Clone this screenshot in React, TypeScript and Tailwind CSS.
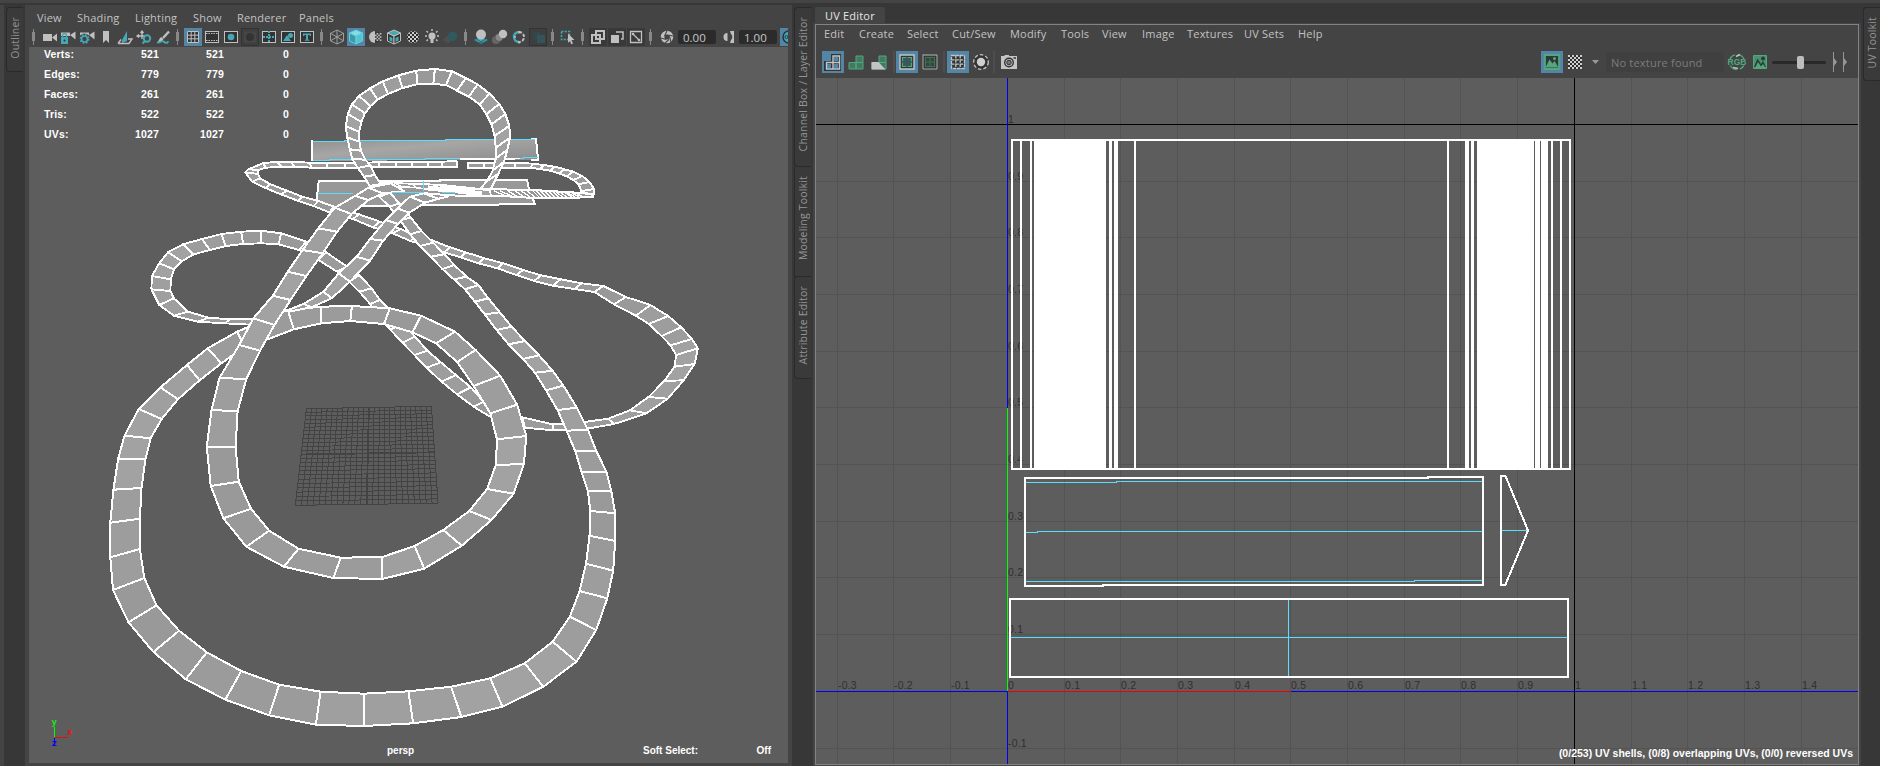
import React from "react";

type Pair = [number, number, number, number];

const px = (x: number) => Math.round((100 + x / 2.529) * 10) / 10;
const py = (y: number) => Math.round((50 + y / 3) * 10) / 10;

/* ---------- track geometry: [edge A x, y, edge B x, y] per cross-section ---------- */

const outerLoop: Pair[] = [
  [475, 780, 490, 838], [412, 812, 424, 868], [347, 845, 365, 890], [272, 895, 307, 940], [220, 945, 252, 991],
  [153, 1012, 197, 1048], [98, 1077, 156, 1107], [62, 1157, 128, 1165], [46, 1226, 115, 1227], [34, 1319, 105, 1314],
  [26, 1418, 101, 1406], [26, 1522, 101, 1497], [33, 1620, 112, 1584], [72, 1717, 143, 1666], [135, 1806, 200, 1742],
  [217, 1888, 270, 1807], [317, 1949, 357, 1863], [428, 1996, 453, 1904], [546, 2024, 558, 1925], [667, 2028, 667, 1931],
  [792, 2020, 780, 1924], [914, 2001, 888, 1910], [1018, 1970, 987, 1885], [1121, 1910, 1074, 1840], [1205, 1835, 1145, 1775],
  [1255, 1740, 1188, 1700], [1283, 1645, 1213, 1623], [1298, 1562, 1229, 1541], [1303, 1473, 1238, 1457], [1303, 1390, 1240, 1383],
  [1293, 1324, 1234, 1323], [1281, 1266, 1218, 1266], [1255, 1202, 1202, 1204], [1234, 1139, 1180, 1142], [1206, 1073, 1157, 1080],
  [1172, 1007, 1128, 1021], [1145, 962, 1100, 968], [1110, 916, 1070, 927], [1075, 873, 1033, 883], [1041, 830, 1003, 840],
  [1011, 787, 973, 793], [982, 745, 948, 755], [957, 705, 923, 718], [927, 680, 895, 688], [896, 645, 866, 657],
  [871, 613, 836, 620], [843, 578, 809, 588], [813, 543, 784, 553], [786, 503, 759, 510], [757, 460, 732, 470], [733, 428, 706, 440],
];

const innerRing: Pair[] = [
  [735, 400, 770, 424], [679, 413, 715, 430], [645, 438, 679, 450], [594, 473, 636, 492], [552, 535, 600, 545], [512, 600, 563, 610],
  [475, 665, 522, 678], [437, 737, 482, 750], [388, 805, 441, 825], [352, 885, 405, 902], [302, 984, 370, 987],
  [282, 1080, 348, 1084], [270, 1191, 343, 1191], [280, 1308, 351, 1295], [312, 1405, 382, 1376], [370, 1490, 428, 1442],
  [465, 1550, 502, 1496], [590, 1584, 609, 1523], [714, 1587, 714, 1521], [820, 1556, 796, 1488], [915, 1487, 868, 1440],
  [990, 1410, 934, 1383], [1046, 1331, 979, 1317], [1072, 1242, 1001, 1245], [1078, 1158, 1004, 1168], [1055, 1064, 987, 1090],
  [1012, 977, 945, 1008], [950, 900, 903, 936], [898, 845, 850, 880], [812, 797, 790, 847], [733, 775, 718, 822],
  [637, 768, 633, 813], [558, 770, 560, 820], [475, 780, 490, 838],
];

const middleTrack: Pair[] = [
  [856, 432, 880, 440], [818, 430, 856, 446], [784, 440, 822, 458], [752, 475, 782, 488], [723, 510, 754, 522], [683, 567, 716, 572],
  [649, 620, 683, 632], [604, 670, 632, 695], [565, 725, 586, 745], [515, 762, 535, 772], [475, 780, 482, 784],
];

const leftLoop: Pair[] = [
  [380, 824, 392, 808], [315, 820, 330, 808], [247, 815, 275, 803], [187, 797, 222, 785], [150, 765, 187, 745], [130, 718, 178, 723],
  [131, 678, 179, 688], [150, 640, 187, 658], [172, 607, 207, 634], [210, 583, 237, 613], [258, 567, 278, 600],
  [307, 552, 318, 588], [357, 545, 362, 582], [407, 542, 407, 580], [458, 550, 452, 583], [522, 575, 503, 600],
  [572, 607, 552, 630], [625, 650, 600, 665], [656, 675, 630, 695], [687, 715, 656, 725], [708, 750, 683, 762],
  [735, 780, 705, 800], [765, 820, 735, 840], [797, 860, 765, 878], [828, 902, 795, 915], [862, 937, 826, 953],
  [900, 975, 864, 995], [938, 1012, 903, 1033], [970, 1055, 945, 1070], [1020, 1090, 1000, 1110], [1068, 1102, 1075, 1133],
  [1145, 1123, 1145, 1141], [1220, 1117, 1232, 1136], [1285, 1106, 1300, 1122], [1340, 1081, 1382, 1090], [1387, 1041, 1436, 1046],
  [1427, 993, 1476, 991], [1453, 950, 1504, 942], [1457, 915, 1512, 895], [1443, 886, 1497, 867], [1420, 858, 1470, 832],
  [1388, 822, 1437, 798], [1355, 797, 1392, 765], [1300, 763, 1330, 741], [1250, 726, 1273, 708], [1200, 717, 1218, 700],
  [1145, 707, 1165, 688], [1098, 693, 1115, 676], [1053, 675, 1070, 660], [1005, 655, 1020, 640], [957, 640, 972, 625],
  [912, 622, 925, 607], [870, 607, 885, 592], [830, 588, 843, 572], [785, 573, 800, 558], [740, 550, 760, 537],
  [690, 532, 708, 515], [640, 507, 655, 493], [580, 487, 592, 470], [540, 468, 552, 453], [500, 452, 512, 440],
  [457, 433, 473, 422], [420, 415, 430, 402], [385, 395, 405, 385], [367, 367, 400, 372], [375, 358, 400, 360],
  [412, 340, 420, 353], [445, 335, 460, 350], [483, 335, 492, 350], [530, 338, 536, 353], [575, 338, 575, 353],
  [620, 338, 620, 353], [662, 338, 662, 353], [705, 337, 705, 352], [748, 336, 748, 351], [788, 335, 788, 350],
  [830, 335, 830, 350], [866, 335, 866, 350], [902, 333, 902, 352],
];

const rightStrip: Pair[] = [
  [930, 338, 930, 355], [970, 338, 970, 355], [1012, 338, 1012, 353], [1052, 338, 1048, 353], [1095, 341, 1088, 353], [1122, 345, 1112, 357],
  [1150, 350, 1138, 362], [1175, 358, 1160, 370], [1197, 365, 1180, 379], [1220, 378, 1197, 390], [1238, 396, 1210, 403],
  [1250, 417, 1218, 423], [1249, 432, 1214, 428], [1215, 438, 1190, 427],
];

const topLoop: Pair[] = [
  [682, 408, 710, 402], [668, 380, 695, 375], [652, 354, 684, 346], [638, 327, 671, 329], [632, 298, 660, 302],
  [625, 262, 656, 275], [622, 228, 655, 246], [627, 192, 661, 216], [637, 163, 670, 190], [655, 138, 684, 168],
  [683, 115, 702, 149], [715, 94, 728, 132], [755, 76, 765, 114], [800, 62, 802, 103], [847, 57, 843, 102],
  [890, 64, 875, 105], [925, 84, 903, 122], [955, 103, 933, 140], [985, 131, 960, 163], [1010, 162, 977, 192],
  [1025, 192, 990, 223], [1035, 227, 998, 258], [1037, 263, 1001, 293], [1030, 300, 1001, 325], [1022, 335, 993, 362],
  [1007, 372, 980, 392], [988, 418, 960, 418],
];

const upperThread: Pair[] = [
  [712, 397, 725, 412], [745, 398, 762, 410], [790, 402, 800, 413], [830, 402, 832, 418], [870, 409, 880, 424],
  [910, 415, 920, 430], [945, 418, 952, 436], [985, 420, 990, 438],
];

const quad = ([a, b, c, d]: Pair, [e, f, g, h]: Pair) =>
  `${px(a)},${py(b)} ${px(e)},${py(f)} ${px(g)},${py(h)} ${px(c)},${py(d)}`;

const shades = ["#9b9b9b", "#9f9f9f", "#a2a2a2", "#9d9d9d", "#999999"];

const Strip = ({ data, w = 2 }: { data: Pair[]; w?: number }) => (
  <g stroke="#fff" strokeWidth={w} strokeLinejoin="round">
    {data.slice(1).map((p, i) => (
      <polygon key={i} points={quad(data[i], p)} fill={shades[Math.floor(i / 3) % 5]} />
    ))}
  </g>
);

const FloorGrid = () => {
  const tl = [522, 1076], tr = [838, 1069], br = [855, 1360], bl = [494, 1366];
  const mix = (a: number[], b: number[], t: number) => [a[0] + (b[0] - a[0]) * t, a[1] + (b[1] - a[1]) * t];
  const lines = [];
  for (let i = 0; i <= 24; i++) {
    const t = i / 24;
    const v = t / (t + 1.11 * (1 - t));
    const a = mix(tl, tr, t), b = mix(bl, br, t), c = mix(tl, bl, v), d = mix(tr, br, v);
    const w = i === 12 ? 1.8 : 1;
    lines.push(
      <line key={`v${i}`} x1={px(a[0])} y1={py(a[1])} x2={px(b[0])} y2={py(b[1])} strokeWidth={w} />,
      <line key={`h${i}`} x1={px(c[0])} y1={py(c[1])} x2={px(d[0])} y2={py(d[1])} strokeWidth={w} />
    );
  }
  return <g stroke="#434343">{lines}</g>;
};

const Scene = () => (
  <svg className="block" width="759" height="716" viewBox="29 47 759 716" shapeRendering="crispEdges">
    <defs>
      <linearGradient id="bank" x1="0" y1="0" x2="1" y2="1">
        <stop offset="0" stopColor="#8f8f8f" />
        <stop offset="0.4" stopColor="#a6a6a6" />
        <stop offset="1" stopColor="#8c8c8c" />
      </linearGradient>
    </defs>
    <FloorGrid />
    <polygon points="312,141 537,138.7 538.8,159.5 311.5,161" fill="url(#bank)" />
    <path d="M312.500 140l-.5 21M531 138.500h5l2 21h-7" fill="none" stroke="#fff" strokeWidth="2" />
    <path d="M313 141.500h31v-1h101v-1h90" fill="none" stroke="#5cdcff" />
    <path d="M313 160.500h16v-1h96v-1h98v-1h15" fill="none" stroke="#5cdcff" />
    <polygon points="318.700,181.500 527,179.300 535,204 316.700,206" fill="#989898" />
    <path d="M316.700 200l2-18.500L440 181v-1.500H527l2.500 12M532.500 198l2.500 6-49 .7L362 206" fill="none" stroke="#fff" strokeWidth="2" />
    <path d="M318 193.500h35" stroke="#5cdcff" />
    <Strip data={leftLoop} w={1.9} />
    <path d="M460 159h55M460 158h60" stroke="#fff" />
    <Strip data={rightStrip} w={1.9} />
    <Strip data={topLoop} />
    <polygon points="430,190 480,188 534,190 592,194 592,197 566,198 534,198 490,196 440,196" fill="#969696" />
    <path
      d="M384 183l30 1 28 1 38 4 54 1 48 3 12 2M440 195l30 1 40 .5 24 1.500 32 .5 28-2"
      fill="none" stroke="#fff" strokeWidth="2"
    />
    <path
      d="M494 191l12 5M500 191l12 5M508 191l10 6M514 190l10 7M520 190l10 7M526 190l10 8M532 190l8 8M536 191l8 7M540 191l8 7M544 191l8 7M548 191l8 7M552 191l8 7M556 192l8 6M560 192l8 6M564 192l8 5M568 193l7 4M572 193l7 4M577 194l6 3M430 188l55 3M440 191l50 3"
      stroke="#fff" strokeWidth="1.400"
    />
    <Strip data={upperThread} w={1.6} />
    <path d="M428 188l30 3 24 3" stroke="#fff" strokeWidth="5" />
    <Strip data={outerLoop} />
    <Strip data={innerRing} />
    <Strip data={middleTrack} />
    <path d="M392 192.500h32M442 192.500h13M423.500 181v10" stroke="#5cdcff" />
    <g strokeWidth="1">
      <path d="M54.500 727v10" stroke="#00ff00" />
      <path d="M54.500 737.500h13" stroke="#e01010" />
      <path d="M54.500 738v7" stroke="#0000ff" />
    </g>
    <g fontFamily="DejaVu Sans Mono" fontWeight="bold" fontSize="9">
      <text x="51.500" y="725" fill="#20e020">y</text>
      <text x="67" y="735" fill="#e81414">x</text>
      <text x="51.500" y="746" fill="#0808f0">z</text>
    </g>
  </svg>
);

/* ---------- UV canvas ---------- */

const ux = (u: number) => Math.floor(1007 + u * 567 + 0.3) + 0.5;
const uy = (v: number) => Math.floor(691 - v * 567 + 0.3) + 0.5;

const bars: [number, number][] = [
  [1020, 2], [1030, 2], [1034, 72], [1109, 3], [1114, 4], [1134, 2], [1447, 2], [1465, 4], [1471, 3],
  [1477, 57], [1535, 5], [1541, 7], [1551, 2], [1560, 2],
];

const UVCanvas = () => {
  const us = Array.from({ length: 18 }, (_, i) => i - 3);
  const vs = Array.from({ length: 12 }, (_, i) => i - 1);
  return (
    <svg className="block" width="1042" height="686" viewBox="816 78 1042 686" shapeRendering="crispEdges">
      <g stroke="#535353">
        {us.map((i) => <line key={i} x1={ux(i / 10)} x2={ux(i / 10)} y1="78" y2="764" />)}
        {vs.map((i) => <line key={i} y1={uy(i / 10)} y2={uy(i / 10)} x1="816" x2="1858" />)}
      </g>
      <g fontFamily="Liberation Sans" fontSize="10.500" fill="#2f2f2f" letterSpacing="0.200">
        {us.filter((i) => i < 15).map((i) => (
          <text key={i} x={ux(i / 10) + 0.5} y="689">{i / 10}</text>
        ))}
        {vs.filter((i) => i !== 0 && i < 11).map((i) => (
          <text key={i} x="1008" y={uy(i / 10) - 1.5}>{i / 10}</text>
        ))}
      </g>
      <path d="M816 124.500H1858M1574.500 78V764" stroke="#000" />
      <path d="M816 691.500H1858M1007.500 78V764" stroke="#0000f0" />
      <path d="M1008 691.500H1291" stroke="#f00000" />
      <path d="M1007.500 408V691" stroke="#00ff00" />
      <rect x="1012" y="140" width="558" height="329" fill="none" stroke="#fff" strokeWidth="2" />
      {bars.map(([x, w]) => <rect key={x} x={x} y="140" width={w} height="329" fill="#fff" />)}
      <path d="M1026 482.500h90v-1h366M1026 532.500h11v-1h445M1026 581.500h388v-1h68" fill="none" stroke="#5cdcff" />
      <path d="M1025 478h403v-1h55v108H1103v1h-78z" fill="none" stroke="#fff" strokeWidth="2" />
      <path d="M1502 530.500h25" stroke="#5cdcff" />
      <path d="M1501 476h4.500l22.500 54.500-22.500 54h-4.500z" fill="none" stroke="#fff" strokeWidth="2" />
      <path d="M1010 637.500h558M1288.500 599v78" stroke="#5cdcff" />
      <rect x="1010" y="599" width="558" height="78" fill="none" stroke="#fff" strokeWidth="2" />
    </svg>
  );
};

/* ---------- viewport toolbar icons ---------- */

const G = "#c0c0c0";
const T = "#45a9b5";

const Ico = ({ hi, box, dim, children }: { hi?: boolean; box?: boolean; dim?: boolean; children: React.ReactNode }) => (
  <span className={`ml-px h-[18px] w-[18px] shrink-0 ${hi ? "bg-[#5285a6]" : box ? "bg-[#393939]" : dim ? "border border-[#333] bg-[#3e3e3e]" : ""}`}>
    <svg className="block" width={dim ? 16 : 18} height={dim ? 16 : 18} viewBox={dim ? "1 1 16 16" : "0 0 18 18"} fill="none">{children}</svg>
  </span>
);

const Sep = () => (
  <span className="flex h-[18px] w-[11px] shrink-0 justify-center">
    <svg width="3" height="18" viewBox="0 0 3 18"><path d="M1.500 1v16" stroke="#888" /><rect y="4" width="3" height="9" fill="#888" /></svg>
  </span>
);

const Cube = ({ a, b, c, line }: { a: string; b: string; c: string; line: string }) => (
  <g stroke={line} strokeLinejoin="round">
    <path d="M9 2l6.500 3L9 8.200 2.500 5z" fill={a} />
    <path d="M2.500 5L9 8.200V16l-6.500-3z" fill={b} />
    <path d="M15.500 5L9 8.200V16l6.500-3z" fill={c} />
  </g>
);

const Checks = ({ n, s, x, y, fill }: { n: number; s: number; x: number; y: number; fill: string }) => (
  <>
    {Array.from({ length: n * n }, (_, i) =>
      ((i % n) + Math.floor(i / n)) % 2 ? null : (
        <rect key={i} x={x + (i % n) * s} y={y + Math.floor(i / n) * s} width={s} height={s} fill={fill} />
      )
    )}
  </>
);

const Frame = ({ children }: { children?: React.ReactNode }) => (
  <>
    <rect x="2.500" y="3.500" width="13" height="11" fill="#333" stroke={G} />
    {children}
  </>
);

const ViewToolbar = () => (
  <div className="flex h-[18px] items-center overflow-hidden pl-[3px]">
    <Sep />
    <Ico><path d="M3 6h9v7H3z" fill={G} /><path d="M12 9.500l5-4v8z" fill={G} /></Ico>
    <Ico><path d="M2 4.500h9v3.500H2z" fill={G} /><path d="M11 7l5.500-3.500v8z" fill={G} /><rect x="2" y="9" width="7" height="7" fill={T} /><path d="M3.500 9V7.500a2 2 0 014 0V9" stroke={T} strokeWidth="1.300" /><circle cx="5.500" cy="12.500" r="1" fill="#333" /></Ico>
    <Ico><path d="M2 4.500h9v3H2z" fill={G} /><path d="M11 7l5.500-3.500v8z" fill={G} /><circle cx="6.500" cy="11" r="4" stroke="#444" strokeWidth="3" /><circle cx="6.500" cy="11" r="4.200" stroke={T} strokeWidth="1.500" strokeDasharray="1.700 1.600" /><circle cx="6.500" cy="11" r="3" stroke={T} strokeWidth="1.600" /></Ico>
    <Ico><path d="M6 3h6v12l-3-3-3 3z" fill={G} /></Ico>
    <Ico><path d="M6 12l5-9v10l-5 2z" fill={T} /><path d="M2 15.500l3-4M2 15.500h11l3-4.500h-4" stroke={G} strokeWidth="1.400" /></Ico>
    <Ico><path d="M2 8h8M7 3v8M5.500 5L7 3l1.500 2M4 6.500L2 8l2 1.500" stroke={G} strokeWidth="1.300" /><circle cx="12" cy="10.500" r="3.200" stroke={T} strokeWidth="2" /><path d="M10 13l-2.500 2.500" stroke={T} strokeWidth="2" /></Ico>
    <Ico><path d="M15 3.500L9 10" stroke={G} strokeWidth="2.400" /><path d="M7 9l2.500 2c-1 2.500-3.500 3-6.500 3.500C5.500 12.500 5 10.500 7 9z" fill={G} /><path d="M3 14.500c3 1 5-2.500 6.500-1s4.500 2.500 4.500-.5" stroke={T} strokeWidth="1.800" /></Ico>
    <Sep />
    <Ico hi><rect x="3" y="3" width="12" height="12" fill="#333" /><path d="M3.500 3.500h11v11h-11zM7.200 3v12M10.800 3v12M3 7.200h12M3 10.800h12" stroke={G} /></Ico>
    <Ico><Frame><path d="M3 5.500h12M3 12.500h12" stroke={G} strokeDasharray="1.500 1" /></Frame></Ico>
    <Ico><Frame><circle cx="9" cy="9" r="3.300" fill={T} /></Frame></Ico>
    <Ico dim><rect x="3" y="3.500" width="12" height="11" fill="#464646" /><circle cx="9" cy="9" r="4" fill="#333" /></Ico>
    <Ico><Frame><path d="M9 3v12M3 9h12" stroke={T} strokeWidth="2" strokeDasharray="2 1" /></Frame></Ico>
    <Ico><Frame><path d="M4 13l4-6 4 6z" fill={T} /><circle cx="11.500" cy="7.500" r="2.500" fill={T} /></Frame></Ico>
    <Ico><Frame><path d="M5 5.500h8v2.500h-1l-.6-1H10v4.500l1.200.5v.8H6.800v-.8l1.200-.5V7H6.600L6 8H5z" fill={T} /></Frame></Ico>
    <Sep />
    <Ico><g stroke="#a8a8a8"><path d="M9 2l6.500 3.300v7.500L9 16l-6.500-3.200V5.300zM2.500 5.300L9 9l6.500-3.700M9 9v7M9 2v7M2.500 12.800L9 9l6.500 3.800" strokeWidth=".9" /></g></Ico>
    <Ico hi><Cube a="#86dbe6" b="#3f9aa5" c="#52c4d2" line="#62cfdc" /></Ico>
    <Ico><circle cx="9" cy="9" r="6" fill="#373737" /><path d="M9 3a6 6 0 000 12z" fill={G} /><Checks n={5} s={1.6} x={7.400} y={5} fill={G} /></Ico>
    <Ico><Cube a="#45a9b5" b="#333" c="#333" line={G} /><path d="M4.500 8.500l3 1.500v4l-3-1.500zM13.500 8.500l-3 1.500v4l3-1.500z" fill={T} /></Ico>
    <Ico><circle cx="9" cy="9" r="6" fill="#2b2b2b" /><clipPath id="cc"><circle cx="9" cy="9" r="6" /></clipPath><g clipPath="url(#cc)"><Checks n={7} s={2} x={2} y={2} fill="#cfcfcf" /></g></Ico>
    <Ico><circle cx="9" cy="8" r="3.500" fill={G} /><path d="M7.500 11h3v4h-3z" fill={G} /><path d="M9 1v2M2 8h2M14 8h2M3.500 3l1.500 1.500M14.500 3L13 4.500M3.500 13L5 11.500M14.500 13L13 11.500" stroke={G} strokeWidth="1.400" /></Ico>
    <Ico><path d="M1 11l7-5v9c-3 0-6-1-7-4z" fill="#4e4e4e" /><circle cx="10.500" cy="8.500" r="4.700" fill="#2f5b60" /></Ico>
    <Sep />
    <Ico><path d="M2 12l7-3 7 3-7 4z" fill={T} /><path d="M2 12l7 4 7-4M4 11l7 4M14 11l-7 4" stroke="#2a6a72" /><circle cx="9" cy="6.500" r="5" fill={G} /></Ico>
    <Ico><circle cx="5" cy="12" r="4" fill="#666" /><circle cx="8" cy="9.500" r="4" fill="#888" stroke="#444" strokeWidth=".6" /><circle cx="12" cy="6" r="4.200" fill={G} /></Ico>
    <Ico><path d="M9 4a5 5 0 000 10" stroke={T} strokeWidth="2.500" /><path d="M9 4a5 5 0 010 10" stroke={G} strokeWidth="2" strokeDasharray="3 1.500" /><path d="M9 3v2.500M4 9h2M9 13v2.500" stroke={G} strokeWidth="1.500" /></Ico>
    <Ico dim><path d="M4 4h7v7H4z" fill="#34474a" /><path d="M8 7h8v8H8z" fill="#31555a" /></Ico>
    <Sep />
    <Ico><path d="M2.500 3.500h8v8h-8z" stroke={T} strokeWidth="1.500" strokeDasharray="2 1.300" /><path d="M9 5.500l6.500 6.500h-3l1.500 3.500-1.800.8L11 13l-2 1.700z" fill={G} /></Ico>
    <Sep />
    <Ico box><path d="M3 7h8v8H3zM7 3h8v8H7z" stroke={G} strokeWidth="2" /></Ico>
    <Ico box><path d="M8 4h7v7h-2" stroke={G} strokeWidth="1.500" /><path d="M3 7h8v8H3z" fill={G} /></Ico>
    <Ico box><path d="M3.500 3.500h11v11h-11zM6 6l6 6" stroke={G} strokeWidth="1.300" /><circle cx="6" cy="6" r="1.300" fill={G} /><circle cx="12" cy="12" r="1.300" fill={G} /></Ico>
    <Sep />
    <Ico><circle cx="10" cy="9" r="4.400" stroke={G} strokeWidth="3.600" /><path d="M10 3l-2.500 5M16 8l-5.500-1M14 14l-1.500-5.500M8 15l4-3.500M4 10l5 1.500" stroke="#444" strokeWidth="1.100" /></Ico>
    <span className="ml-[3px] h-[14px] w-[38px] shrink-0 rounded-xs bg-[#2b2b2b] pl-[5px] text-[11.500px] leading-[15px] text-[#c8c8c8]">0.00</span>
    <span className="w-[2px] shrink-0" />
    <Ico><path d="M11 3h4v12h-4l1-3a4 4 0 000-6z" fill={G} /><path d="M8.500 5a4 4 0 000 8z" fill={G} /></Ico>
    <span className="ml-[2px] h-[14px] w-[38px] shrink-0 rounded-xs bg-[#2b2b2b] pl-[5px] text-[11.500px] leading-[15px] text-[#c8c8c8]">1.00</span>
    <span className="ml-[3px] h-[18px] w-[8px] shrink-0 overflow-hidden bg-[#5285a6]">
      <svg width="18" height="18" viewBox="0 0 18 18"><circle cx="9" cy="9" r="6" fill="none" stroke="#26343a" strokeWidth="1.500" /><circle cx="9" cy="9" r="5" fill={T} /><circle cx="6.500" cy="9" r="1.500" fill="none" stroke="#26343a" /></svg>
    </span>
  </div>
);

/* ---------- UV toolbar ---------- */

const E = "#53a67f";

const UVBtn = ({ hi, children }: { hi?: boolean; children: React.ReactNode }) => (
  <span className={`h-[22px] w-[22px] shrink-0 ${hi ? "bg-[#5285a6]" : ""}`}>
    <svg className="block" width="22" height="22" viewBox="0 0 22 22" fill="none">{children}</svg>
  </span>
);

const UVSep = () => <span className="h-[22px] w-[2px] shrink-0 bg-[#4d4d4d]" />;

const UVToolbar = () => (
  <div className="mt-[10px] flex h-[22px] items-center">
    <div className="flex w-[719px] items-center pl-[6px]">
      <UVBtn hi><path d="M3.500 11.500h7v7h-7zM10.500 11.500h7v7h-7zM10.500 4.500h7v7h-7z" stroke="#2e3438" strokeWidth="3" /><path d="M4.500 11.500h6.500v6.500H4.500zM11 11.500h6.500v6.500H11zM11 5h6.500v6.500H11z" stroke="#c4c4c4" strokeWidth="1.400" /></UVBtn>
      <span className="w-px" />
      <UVBtn><path d="M4 11.500h7v6.500H4zM11 11.500h7v6.500h-7zM11 5h7v6.500h-7z" fill="#417a60" stroke={E} /></UVBtn>
      <span className="w-px" />
      <UVBtn><path d="M4 11.500h7v6.500H4zM11 11.500h7v6.500h-7zM11 5h7v6.500h-7z" fill="#417a60" stroke={E} /><path d="M3.500 11h7l7 7.500h-14z" fill="#c4c4c4" /></UVBtn>
      <span className="w-[3px]" /><UVSep /><span className="w-px" />
      <UVBtn hi><path d="M4 4h14v14H4z" fill="#2e3438" stroke="#c4c4c4" strokeWidth="1.400" /><path d="M6.500 6.500h9v9h-9z" fill="#31604b" stroke={E} strokeWidth="1.200" /><path d="M11 6v10M6 11h10" stroke="#41506f" strokeWidth="1.500" /></UVBtn>
      <span className="w-px" />
      <UVBtn><path d="M4 4h14v14H4z" fill="#3a3a3a" /><path d="M4 18V4h14" stroke="#909090" strokeWidth="1.300" /><path d="M4 18h14V4" stroke="#a8a8a8" /><path d="M6.500 6.500h9v9h-9zM11 6v10M6 11h10" fill="#31483d" stroke="#3d7258" /></UVBtn>
      <span className="w-[2px]" /><UVSep /><span className="w-[2px]" />
      <UVBtn hi><path d="M4 4h14v14H4z" fill="#2e3438" /><path d="M4.500 4.500h13v13h-13zM8.800 4v14M13.200 4v14M4 8.800h14M4 13.200h14" stroke="#c4c4c4" strokeWidth="1.300" strokeDasharray="3.500 .8" /></UVBtn>
      <span className="w-px" />
      <UVBtn><circle cx="11" cy="11" r="7.300" stroke="#c4c4c4" strokeWidth="1.300" strokeDasharray="3.500 2" fill="#333" /><circle cx="11" cy="11" r="4.200" fill="#cfcfcf" /></UVBtn>
      <span className="w-px" /><UVSep /><span className="w-[3px]" />
      <UVBtn><path d="M3 5h3l1-1h4v1h8v13H3z" fill="#c4c4c4" /><circle cx="11" cy="11.500" r="4.300" fill="#c4c4c4" stroke="#333" strokeWidth="1.400" /><circle cx="11" cy="11.500" r="2.300" fill="#777" stroke="#333" /><path d="M15.500 7h2.500" stroke="#333" strokeWidth="1.500" /></UVBtn>
    </div>
    <div className="flex items-center pl-[6px]">
      <UVBtn hi><path d="M4 4h14v14H4z" fill="#2f3a36" stroke={E} strokeWidth="1.800" /><path d="M4.500 16.500l4-8 3 4 2-2.500 4 6.500z" fill={E} /><circle cx="13.500" cy="7.500" r="1.500" fill={E} /></UVBtn>
      <span className="w-[2px]" />
      <UVBtn><path d="M3 4h14v14H3z" fill="#303030" /><Checks n={7} s={2} x={3} y={4} fill="#cfcfcf" /></UVBtn>
      <svg className="ml-[5px]" width="7" height="4" viewBox="0 0 7 4"><path d="M0 0h7L3.500 4z" fill="#999" /></svg>
      <span className="ml-[7px] h-[20px] w-[118px] rounded-xs bg-[#404040] pl-[5px] text-[11px] leading-[22px] tracking-[0.200px] whitespace-nowrap text-[#7c7c7c]">No texture found</span>
      <svg className="ml-[3px]" width="20" height="20" viewBox="0 0 20 20" fill="none">
        <circle cx="10" cy="10" r="7.500" stroke={E} strokeWidth="1.300" strokeDasharray="9 3" />
        <path d="M6 15.500l5 1M9 4.500l4-2" stroke={G} strokeWidth="1.600" />
        <rect x="1" y="7" width="18" height="6.500" fill="#3d4a44" />
        <text x="10" y="13.200" textAnchor="middle" fontFamily="Liberation Sans" fontWeight="bold" fontSize="8.500" fill={E}>RGB</text>
      </svg>
      <svg className="ml-[5px]" width="16" height="16" viewBox="0 0 16 16" fill="none"><path d="M1.500 1.500h13v13h-13z" fill="#4a9371" stroke={E} /><path d="M2 13l3.500-8.500 3.500 5.500 2-3 3 6z" fill="#2c3c34" /><path d="M3 14l3-6 3 4.500 2-2.500 2.500 4z" fill={E} /><circle cx="11" cy="4.500" r="2" fill="#2c3c34" /></svg>
      <span className="relative ml-[4px] h-[3px] w-[54px] rounded-full bg-[#292929]">
        <span className="absolute top-[-5px] left-[25px] h-[13px] w-[7px] rounded-xs bg-[#bdbdbd]" />
      </span>
      <svg className="ml-[6px]" width="16" height="20" viewBox="0 0 16 20"><path d="M1.500 0v20M11.500 0v20" stroke="#969696" /><path d="M2 6l3 4-3 4zM12 6l3 4-3 4z" fill="#969696" /></svg>
    </div>
  </div>
);

/* ---------- menus, tabs, heads-up display ---------- */

const Menu = ({ items }: { items: [string, string][] }) => (
  <div className="flex text-[11px] tracking-[0.200px] whitespace-nowrap text-[#c2c2c2]">
    {items.map(([label, width]) => <span key={label} className={width}>{label}</span>)}
  </div>
);

const SideTab = ({ label, size, side }: { label: string; size: string; side: string }) => (
  <div className={`flex items-start justify-center border-b border-[#2a2a2a] bg-[#3a3a3a] pt-[9px] ${side} ${size}`}>
    <span className="rotate-180 text-[10.500px] leading-[14px] tracking-[0.180px] whitespace-nowrap text-[#959595] [writing-mode:vertical-rl]">{label}</span>
  </div>
);

const stats = [
  ["Verts:", "521", "521", "0"],
  ["Edges:", "779", "779", "0"],
  ["Faces:", "261", "261", "0"],
  ["Tris:", "522", "522", "0"],
  ["UVs:", "1027", "1027", "0"],
];

export default function App() {
  return (
    <div className="flex h-[766px] w-[1880px] flex-col overflow-hidden bg-[#444] font-['Open_Sans','Noto_Sans',sans-serif]">
      <div className="h-[5px] shrink-0 border-b-2 border-[#373737]" />
      <div className="flex min-h-0 flex-1">
        <aside className="ml-[4px] w-[21px] shrink-0 bg-[#373737] pt-[2px] pl-[2px]">
          <SideTab label="Outliner" size="h-[65px] w-[17px]" side="rounded-l border-t border-l" />
        </aside>

        <section className="flex w-[767px] shrink-0 flex-col">
          <div className="h-[23px] pt-[5px] pl-[12px] leading-[16px]">
            <Menu items={[["View", "w-[40px]"], ["Shading", "w-[58px]"], ["Lighting", "w-[58px]"], ["Show", "w-[44px]"], ["Renderer", "w-[62px]"], ["Panels", "w-[40px]"]]} />
          </div>
          <div className="w-[763px]"><ViewToolbar /></div>
          <div className="relative mt-px ml-[4px] h-[716px] w-[759px] bg-[#5d5d5d] font-['Liberation_Sans',sans-serif] text-[11px] font-bold text-white">
            <Scene />
            <div className="absolute top-[-3px] left-[15px] w-[245px] text-[10.500px] leading-[20px]">
              {stats.map(([name, a, b, c]) => (
                <div key={name} className="grid grid-cols-[60px_55px_65px_65px] text-right tracking-[0.150px]">
                  <span className="text-left">{name}</span><span>{a}</span><span>{b}</span><span>{c}</span>
                </div>
              ))}
            </div>
            <div className="absolute bottom-[5px] left-[358px] text-[10px] leading-[14px] font-bold">persp</div>
            <div className="absolute right-[17px] bottom-[5px] flex w-[128px] justify-between text-[10px] leading-[14px]">
              <span>Soft Select:</span><span>Off</span>
            </div>
          </div>
        </section>

        <aside className="w-[21px] shrink-0 bg-[#373737] pt-[2px] pl-[2px]">
          <SideTab label="Channel Box / Layer Editor" size="h-[160px] w-[17px]" side="rounded-l border-t border-l" />
          <SideTab label="Modeling Toolkit" size="h-[110px] w-[17px]" side="border-l" />
          <SideTab label="Attribute Editor" size="h-[102px] w-[17px]" side="rounded-l border-l" />
        </aside>

        <section className="flex w-[1048px] shrink-0 flex-col">
          <div className="flex h-[18px] items-end bg-[#373737] pl-[2px]">
            <div className="h-[16px] w-[70px] rounded-t-xs bg-[#444] pl-[10px] text-[11px] leading-[18px] tracking-[0.200px] text-[#e6e6e6]">UV Editor</div>
          </div>
          <div className="mt-px ml-[2px] flex h-[741px] w-[1044px] flex-col border border-[#838383]">
            <div className="h-[16px] pt-[1px] pl-[8px] leading-[16px]">
              <Menu items={[["Edit", "w-[35px]"], ["Create", "w-[48px]"], ["Select", "w-[45px]"], ["Cut/Sew", "w-[58px]"], ["Modify", "w-[51px]"], ["Tools", "w-[41px]"], ["View", "w-[40px]"], ["Image", "w-[45px]"], ["Textures", "w-[57px]"], ["UV Sets", "w-[54px]"], ["Help", "w-[40px]"]]} />
            </div>
            <UVToolbar />
            <div className="relative mt-[5px] h-[686px] w-[1042px] bg-[#5d5d5d]">
              <UVCanvas />
              <div className="absolute right-[5px] bottom-[4px] font-['Liberation_Sans',sans-serif] text-[10.500px] leading-[14px] font-bold whitespace-nowrap text-white">
                (0/253) UV shells, (0/8) overlapping UVs, (0/0) reversed UVs
              </div>
            </div>
          </div>
        </section>

        <aside className="flex-1 bg-[#373737] pt-[2px] pl-[2px]">
          <SideTab label="UV Toolkit" size="h-[74px] w-[17px]" side="rounded-l border-t border-l" />
        </aside>
      </div>
    </div>
  );
}
